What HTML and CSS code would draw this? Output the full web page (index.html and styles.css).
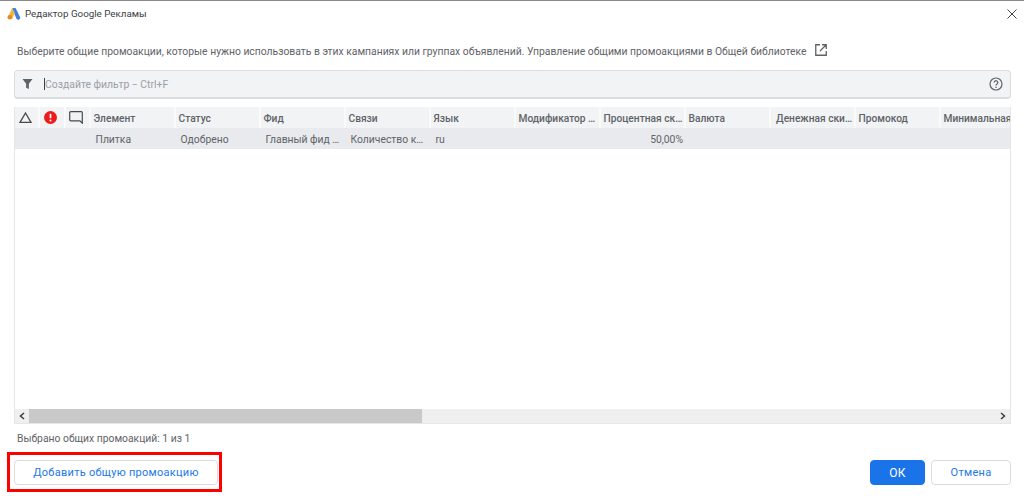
FILE: index.html
```html
<!DOCTYPE html>
<html lang="ru">
<head>
<meta charset="utf-8">
<title>Редактор Google Рекламы</title>
<link rel="stylesheet" href="styles.css">
</head>
<body>
<div class="dialog">
  <header class="titlebar">
    <svg class="logo" width="14" height="13" viewBox="0 0 14 13">
      <path d="M5 1.200 L8.600 1 L13 10 A2 2 0 0 1 9.600 12 Z" fill="#3f7fe0"/>
      <path d="M5 1.200 L8 6 L5 12 L1 10.600 Z" fill="#f2b63c"/>
      <circle cx="2.800" cy="10.300" r="2.300" fill="#e8862d"/>
    </svg>
    <span class="title">Редактор Google Рекламы</span>
    <svg class="close" width="10" height="10" viewBox="0 0 10 10"><path d="M.5.5l9 9M9.500.5l-9 9" stroke="#4a4048" stroke-width="1" fill="none"/></svg>
  </header>
  <p class="desc">
    <span>Выберите общие промоакции, которые нужно использовать в этих кампаниях или группах объявлений. Управление общими промоакциями в Общей библиотеке</span>
    <svg class="ext" width="12" height="12" viewBox="0 0 12 12"><path d="M5 .75H.75v10.500h10.500V7M7 .75h4.250V5M11 1 5 7" stroke="#5f6368" stroke-width="1.300" fill="none"/></svg>
  </p>
  <div class="filter">
    <svg class="funnel" width="11" height="10" viewBox="0 0 12 11"><path d="M.5 0h11L7.500 5.200V11l-3-1.500V5.200z" fill="#5f6368"/></svg>
    <span class="caret"></span>
    <span class="placeholder">Создайте фильтр − Ctrl+F</span>
    <svg class="help" width="14" height="14" viewBox="0 0 14 14">
      <circle cx="7" cy="7" r="6" stroke="#5f6368" stroke-width="1.200" fill="none"/>
      <path d="M5.200 5.500a1.800 1.800 0 1 1 2.800 1.500c-.7.4-1 .8-1 1.500" stroke="#5f6368" stroke-width="1.200" fill="none"/>
      <circle cx="7" cy="10.300" r=".8" fill="#5f6368"/>
    </svg>
  </div>
  <section class="table">
    <div class="row head">
      <div class="cell icon first"><svg width="13" height="11" viewBox="0 0 13 11"><path d="M6.500 1 12 10.300H1z" stroke="#4a4a4a" stroke-width="1.300" fill="none"/></svg></div>
      <div class="cell icon"><svg width="13" height="13" viewBox="0 0 13 13"><circle cx="6.500" cy="6.500" r="6.500" fill="#ea1c1c"/><path d="M6.500 2.800v4.400" stroke="#fff" stroke-width="1.700"/><circle cx="6.500" cy="9.400" r="1" fill="#fff"/></svg></div>
      <div class="cell icon third"><svg width="14" height="13" viewBox="0 0 14 13"><path d="M1.700.7h10.600a1 1 0 0 1 1 1v10.500l-2.400-2.400H1.700a1 1 0 0 1-1-1V1.700a1 1 0 0 1 1-1z" stroke="#4a4a4a" stroke-width="1.200" fill="none"/></svg></div>
      <div class="cell col">Элемент</div>
      <div class="cell col">Статус</div>
      <div class="cell col">Фид</div>
      <div class="cell col">Связи</div>
      <div class="cell col">Язык</div>
      <div class="cell col">Модификатор …</div>
      <div class="cell col">Процентная ск…</div>
      <div class="cell col">Валюта</div>
      <div class="cell col money">Денежная ски…</div>
      <div class="cell col">Промокод</div>
      <div class="cell col last">Минимальная</div>
    </div>
    <div class="row data">
      <div class="cell icon first"></div>
      <div class="cell icon"></div>
      <div class="cell icon third"></div>
      <div class="cell col">Плитка</div>
      <div class="cell col">Одобрено</div>
      <div class="cell col">Главный фид …</div>
      <div class="cell col">Количество к…</div>
      <div class="cell col">ru</div>
      <div class="cell col"></div>
      <div class="cell col num">50,00%</div>
      <div class="cell col"></div>
      <div class="cell col"></div>
      <div class="cell col"></div>
      <div class="cell col last"></div>
    </div>
    <div class="rows-space"></div>
    <div class="scrollbar">
      <svg class="arrow" width="6" height="8" viewBox="0 0 6 8"><path d="M5 1 1.500 4 5 7" stroke="#3c3c3c" stroke-width="1.500" fill="none"/></svg>
      <div class="track"><div class="thumb"></div></div>
      <svg class="arrow" width="6" height="8" viewBox="0 0 6 8"><path d="M1 1l3.500 3L1 7" stroke="#3c3c3c" stroke-width="1.500" fill="none"/></svg>
    </div>
  </section>
  <p class="selected">Выбрано общих промоакций: 1 из 1</p>
  <footer class="footer">
    <div class="add-wrap">
      <button class="btn add">Добавить общую промоакцию</button>
      <div class="highlight"></div>
    </div>
    <button class="btn ok">ОК</button>
    <button class="btn cancel">Отмена</button>
  </footer>
</div>
</body>
</html>
```
FILE: styles.css
```css
* { box-sizing: border-box; }
html, body { margin: 0; height: 100%; }
body {
  background: #fff;
  font-family: Roboto, "Liberation Sans", sans-serif;
  font-size: 10.350px;
  color: #5f6368;
  overflow: hidden;
}
.dialog {
  width: 1024px;
  height: 496px;
  border-top: 1px solid #8a8a8a;
  display: flex;
  flex-direction: column;
  padding: 0 13px 0 14px;
}
.titlebar {
  height: 25px;
  display: flex;
  align-items: center;
  margin-left: -7px;
  margin-right: -6px;
}
.logo { margin-right: 4px; }
.title { color: #3c4043; font-size: 9.800px; }
.close { margin-left: auto; }
.desc {
  margin: 0;
  height: 44px;
  padding: 19px 0 0 3px;
  display: flex;
  align-items: flex-start;
  line-height: 14px;
}
.ext { margin-left: 8.500px; margin-top: -1px; }
.filter {
  height: 29px;
  background: #f1f3f4;
  border: 1px solid #dadce0;
  border-bottom-width: 2px;
  border-radius: 4px;
  display: flex;
  align-items: center;
  padding: 0 7px 0 7px;
}
.caret { width: 1px; height: 12px; background: #3c4043; margin-left: 11px; }
.placeholder { color: #9aa0a6; font-size: 10.400px; }
.help { margin-left: auto; }
.table {
  margin-top: 8px;
  height: 317px;
  border-left: 1px solid #e4e6e8;
  border-right: 1px solid #e4e6e8;
  border-bottom: 1px solid #e4e6e8;
  display: flex;
  flex-direction: column;
  overflow: hidden;
}
.row { display: flex; flex: none; }
.head {
  height: 21px;
  background: #f1f3f4;
  color: #5f6368;
  font-weight: 500;
  font-size: 10.200px;
}
.data {
  height: 21px;
  background: #e8eaed;
  color: #5f6368;
}
.cell {
  flex: none;
  height: 100%;
  display: flex;
  align-items: center;
  white-space: nowrap;
  overflow: hidden;
}
.head .cell { border-right: 2px solid #fafafb; }
.icon { width: 26px; justify-content: center; padding-right: 3px; }
.first, .third { width: 25px; }
.col { width: 85px; padding: 1px 0 0 2.500px; }
.data .col { padding-left: 4.500px; }
.head .money { padding-left: 5px; }
.data .num { justify-content: flex-end; padding-right: 3px; }
.last { flex: 1; border-right: 0 !important; }
.rows-space { flex: 1; }
.scrollbar {
  height: 14px;
  flex: none;
  background: #efefef;
  display: flex;
  align-items: center;
}
.arrow { flex: none; margin: 0 4px; }
.track { flex: 1; height: 100%; }
.thumb { width: 393px; height: 100%; background: #c9c9c9; }
.selected {
  margin: 0;
  height: 36px;
  padding: 8px 0 0 3px;
  line-height: 14px;
}
.footer { display: flex; align-items: flex-start; }
.btn {
  height: 25px;
  border-radius: 4px;
  font: 400 11px Roboto, "Liberation Sans", sans-serif;
  letter-spacing: .28px;
  border: 1px solid #dadce0;
  background: #fff;
  color: #2277e6;
  padding: 0;
}
.add-wrap { position: relative; display: flex; margin-right: auto; }
.add { width: 204px; }
.highlight {
  position: absolute;
  left: -7px;
  right: -4px;
  top: -8px;
  bottom: -7px;
  border: 3px solid #ff0000;
  pointer-events: none;
}
.ok { width: 55px; background: #1a73e8; border-color: #1a73e8; color: #fff; margin-right: 6px; font-size: 12px; }
.cancel { width: 80px; }
```
